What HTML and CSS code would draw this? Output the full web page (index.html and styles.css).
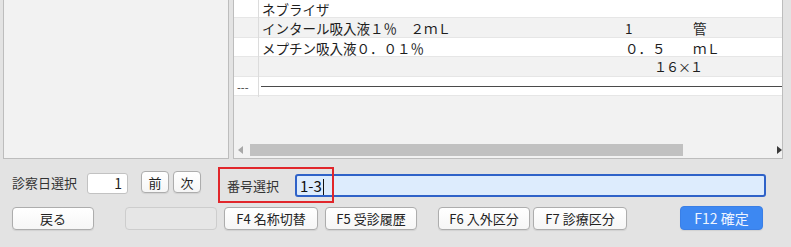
FILE: index.html
```html
<!DOCTYPE html>
<html lang="ja">
<head>
    <meta charset="UTF-8">
    <title>診療行為 番号選択</title>
    <link rel="stylesheet" href="styles.css">
</head>
<body>

<div class="screen">
    <div class="top">
        <div class="side-panel"></div>

        <div class="list-panel">
            <div class="list">
                <div class="row first">
                    <span class="mark"></span>
                    <span class="name">ネブライザ</span>
                    <span class="qty"></span>
                    <span class="unit"></span>
                </div>
                <div class="row alt">
                    <span class="mark"></span>
                    <span class="name">インタール吸入液１％　２ｍＬ</span>
                    <span class="qty">1</span>
                    <span class="unit">管</span>
                </div>
                <div class="row">
                    <span class="mark"></span>
                    <span class="name">メプチン吸入液０．０１％</span>
                    <span class="qty">０．５</span>
                    <span class="unit">ｍＬ</span>
                </div>
                <div class="row alt">
                    <span class="mark"></span>
                    <span class="name"></span>
                    <span class="qty times">１６×１</span>
                    <span class="unit"></span>
                </div>
                <div class="row">
                    <span class="mark dashes">---</span>
                    <span class="rule"></span>
                </div>
            </div>

            <div class="hscroll">
                <span class="arrow arrow-left"></span>
                <div class="track"><div class="thumb"></div></div>
                <span class="arrow arrow-right"></span>
            </div>
        </div>
    </div>

    <div class="controls">
        <div class="line line-select">
            <span class="label">診察日選択</span>
            <span class="field day-field">1</span>
            <button class="btn small-btn prev-btn">前</button>
            <button class="btn small-btn">次</button>

            <div class="number-select">
                <span class="label number-label">番号選択</span>
                <span class="field number-field">1-3<span class="caret"></span></span>
                <span class="highlight"></span>
            </div>
        </div>

        <div class="line line-keys">
            <button class="btn key-back">戻る</button>
            <button class="btn key-blank" disabled></button>
            <button class="btn key-f4">F4 名称切替</button>
            <button class="btn key-f5">F5 受診履歴</button>
            <button class="btn key-f6">F6 入外区分</button>
            <button class="btn key-f7">F7 診療区分</button>
            <button class="btn primary key-f12">F12 確定</button>
        </div>
    </div>
</div>

</body>
</html>
```

FILE: styles.css
```css
html, body {
    margin: 0;
    padding: 0;
}

body {
    width: 791px;
    height: 247px;
    overflow: hidden;
    background: #e3e3e3;
    font-family: "Noto Sans CJK JP", "Noto Sans", sans-serif;
    color: #1e1e1e;
}

.top {
    display: flex;
    height: 160px;
    padding-left: 3px;
    gap: 4px;
}

.side-panel {
    width: 226px;
    height: 159px;
    box-sizing: border-box;
    background: #f2f2f2;
    border: 1px solid #bdbdbd;
    border-top: none;
}

.list-panel {
    width: 550px;
    height: 159px;
    box-sizing: border-box;
    background: #f2f2f2;
    border: 1px solid #bdbdbd;
    border-top: none;
    display: flex;
    flex-direction: column;
    overflow: hidden;
}

.list {
    flex-grow: 1;
}

.row {
    display: grid;
    grid-template-columns: 25px 366px 68px 1fr;
    height: 19.5px;
    box-sizing: border-box;
    background: #fff;
    border-bottom: 1px solid #e6e6e6;
    font-size: 13.5px;
    line-height: 20px;
    white-space: nowrap;
}

/* top row is partly scrolled out of view */
.row.first {
    height: 18px;
    line-height: 19.6px;
}

.row.alt {
    background: #f2f2f2;
}

.mark {
    border-right: 1px solid #dcdcdc;
}

.name {
    padding-left: 3px;
}

.times {
    padding-left: 29px;
    font-size: 13px;
    letter-spacing: -1px;
}

.dashes {
    font-size: 11px;
    padding-left: 3px;
    color: #333;
}

.rule {
    grid-column: 2 / -1;
    margin-left: 2px;
    align-self: center;
    border-top: 1px solid #4a4a4a;
}

.hscroll {
    display: flex;
    align-items: center;
    height: 13px;
    margin-bottom: 2px;
}

.arrow {
    width: 0;
    height: 0;
    border-top: 4px solid transparent;
    border-bottom: 4px solid transparent;
}

.arrow-left {
    margin-left: 4px;
    border-right: 5px solid #a8a8a8;
}

.arrow-right {
    margin-left: 4px;
    border-left: 5px solid #3a3a3a;
}

.track {
    flex-grow: 1;
    height: 12px;
    margin-left: 7px;
}

.thumb {
    width: 433px;
    height: 12px;
    background: #c1c1c1;
}

.controls {
    padding-top: 10px;
}

.line {
    display: flex;
    align-items: flex-start;
}

.line-select {
    height: 37px;
}

.label {
    font-size: 13px;
    color: #333;
}

.line-select > .label {
    margin-left: 12px;
    margin-top: 3px;
}

.field {
    box-sizing: border-box;
    background: #fff;
    border: 1px solid #c2c2c2;
    border-radius: 3px;
    font-size: 14px;
    line-height: 19px;
}

.day-field {
    width: 41px;
    height: 21px;
    margin-left: 10px;
    margin-top: 3px;
    padding-right: 5px;
    text-align: right;
}

.btn {
    box-sizing: border-box;
    height: 23px;
    padding: 0;
    background: linear-gradient(#ffffff, #f6f6f6);
    border: 1px solid #adadad;
    border-radius: 4px;
    box-shadow: 0 1px 1px rgba(0, 0, 0, 0.08);
    font-family: inherit;
    font-size: 13px;
    color: #222;
}

.small-btn {
    width: 28px;
    height: 22px;
    margin-left: 4px;
    margin-top: 1px;
}

.prev-btn {
    margin-left: 13px;
}

.number-select {
    position: relative;
    display: flex;
    align-items: center;
    margin-left: 26px;
    margin-top: 4px;
}

.number-label {
    margin-left: 0;
}

.number-field {
    width: 471px;
    height: 23px;
    margin-left: 16px;
    padding-left: 3px;
    background: #ddecfd;
    border: 2px solid #2f62c8;
    border-radius: 3px;
    font-size: 15px;
    line-height: 19px;
    color: #111;
}

.caret {
    display: inline-block;
    width: 1px;
    height: 16px;
    margin-left: 1px;
    vertical-align: -3px;
    background: #111;
}

.highlight {
    position: absolute;
    left: -9px;
    top: -7px;
    width: 116px;
    height: 36px;
    box-sizing: border-box;
    border: 2px solid #e1262b;
}

.line-keys .btn {
    margin-left: 7px;
}

.line-keys .key-back {
    width: 82px;
    margin-left: 12px;
}

.line-keys .key-blank {
    width: 92px;
    margin-left: 31px;
    background: #e6e6e6;
    border-color: #cdcdcd;
    box-shadow: none;
}

.key-f4 {
    width: 94px;
}

.key-f5 {
    width: 92px;
}

.line-keys .key-f6 {
    width: 92px;
    margin-left: 21px;
}

.line-keys .key-f7 {
    width: 94px;
    margin-left: 3px;
}

.line-keys .primary {
    width: 83px;
    height: 24px;
    margin-left: 53px;
    margin-top: -1px;
    background: #3d88f2;
    border: 1px solid #3a7fe6;
    color: #eef4ff;
    font-size: 14px;
}
```
